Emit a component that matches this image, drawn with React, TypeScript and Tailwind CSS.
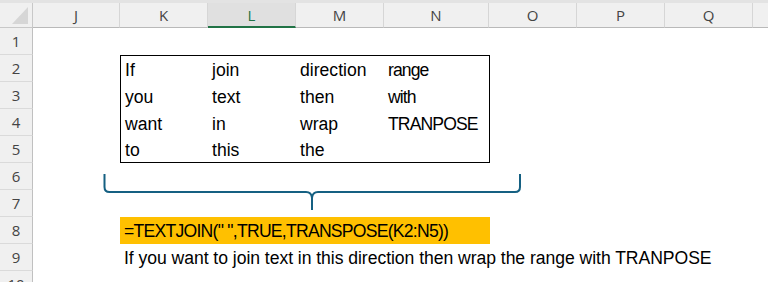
const cols = [
  { name: "J", w: "w-[87px]" },
  { name: "K", w: "w-[88px]" },
  { name: "L", w: "w-[88px]", active: true },
  { name: "M", w: "w-[88px]" },
  { name: "N", w: "w-[105px]" },
  { name: "O", w: "w-[88px]" },
  { name: "P", w: "w-[88px]" },
  { name: "Q", w: "w-[88px]" },
  { name: "", w: "w-[40px]" },
];

const words = [
  ["If", "join", "direction", "range"],
  ["you", "text", "then", "with"],
  ["want", "in", "wrap", "TRANPOSE"],
  ["to", "this", "the", ""],
];

const cellFont = "font-['Liberation_Sans',Arial,sans-serif] text-[17.6px] leading-[20px] text-black";

// column letters
function Header() {
  return (
    <div className="flex h-[28px] shrink-0 border-t-[3px] border-[#e3e3e3] bg-[#f0f0f0]">
      <div className="relative w-[33px] shrink-0 border-r border-b border-[#c8c8c8]">
        <svg className="absolute left-0 top-0" width="33" height="25" viewBox="0 0 33 25">
          <polygon points="28,4 28,21 12,21" fill="#d6d6d6" />
        </svg>
      </div>
      {cols.map((c) => (
        <div
          key={c.name}
          className={
            "flex shrink-0 items-center justify-center border-r border-[#d6d6d6] font-['Open_Sans',sans-serif] text-[15px] " +
            c.w +
            (c.active
              ? " border-b-2 border-b-[#217346] bg-[#e0e0e0] pt-[1px] text-[#217346]"
              : " border-b border-b-[#b9b9b9] text-[#444444]")
          }
        >
          {c.name}
        </div>
      ))}
    </div>
  );
}

function RowHead({ n }: { n: number }) {
  return (
    <div className="flex w-[33px] shrink-0 items-center justify-center border-r border-b border-r-[#c0c0c0] border-b-[#dadada] bg-[#f0f0f0] pt-[1px] font-['Open_Sans',sans-serif] text-[15px] text-[#444444]">
      {n}
    </div>
  );
}

function Cell({ w, children, className = "" }: { w: string; children?: React.ReactNode; className?: string }) {
  return (
    <div className={"flex shrink-0 items-end overflow-visible whitespace-nowrap pb-[2px] pl-[4px] " + w + " " + cellFont + " " + className}>
      {children}
    </div>
  );
}

export default function App() {
  return (
    <div className="relative h-[282px] w-[768px] overflow-hidden bg-white">
      <Header />
      <div className="flex">
        <div className="flex flex-col">
          {Array.from({ length: 10 }).map((_, i) => (
            <div key={i} className="flex h-[27px]">
              <RowHead n={i + 1} />
            </div>
          ))}
        </div>
        <div className="flex flex-col">
          <div className="h-[27px]" />
          {/* K2:N5 block */}
          <div className="ml-[87px] flex w-[370px] flex-col border border-black">
            {words.map((row, r) => (
              <div key={r} className={"flex " + (r === 0 ? "h-[26px]" : r === 3 ? "h-[26px]" : "h-[27px]")}>
                <Cell w="w-[87px]" className="pl-[3px]">{row[0]}</Cell>
                <Cell w="w-[88px]">{row[1]}</Cell>
                <Cell w="w-[88px]">{row[2]}</Cell>
                <Cell w="w-[105px]" className="tracking-[-0.9px]">{row[3]}</Cell>
              </div>
            ))}
          </div>
          <div className="h-[54px]" />
          <div className="ml-[87px] flex h-[27px] w-[370px] items-end bg-[#ffc000] pb-[3px] pl-[4px]">
            <span className={cellFont + " tracking-[-0.75px]"}>=TEXTJOIN(" ",TRUE,TRANSPOSE(K2:N5))</span>
          </div>
          <div className="ml-[87px] flex h-[27px] items-end whitespace-nowrap pb-[3px] pl-[4px]">
            <span className={cellFont + " tracking-[-0.05px]"}>
              If you want to join text in this direction then wrap the range with TRANPOSE
            </span>
          </div>
        </div>
      </div>
      {/* brace shape */}
      <svg className="absolute left-0 top-0" width="768" height="282" viewBox="0 0 768 282" fill="none">
        <path
          d="M104.5 174 V187 Q104.5 192 109.5 192 H306 Q311.5 192 312 198 V210 M312 198 Q312.5 192 318 192 H515 Q520 192 520 187 V174"
          stroke="#156082"
          strokeWidth="2"
        />
      </svg>
    </div>
  );
}
